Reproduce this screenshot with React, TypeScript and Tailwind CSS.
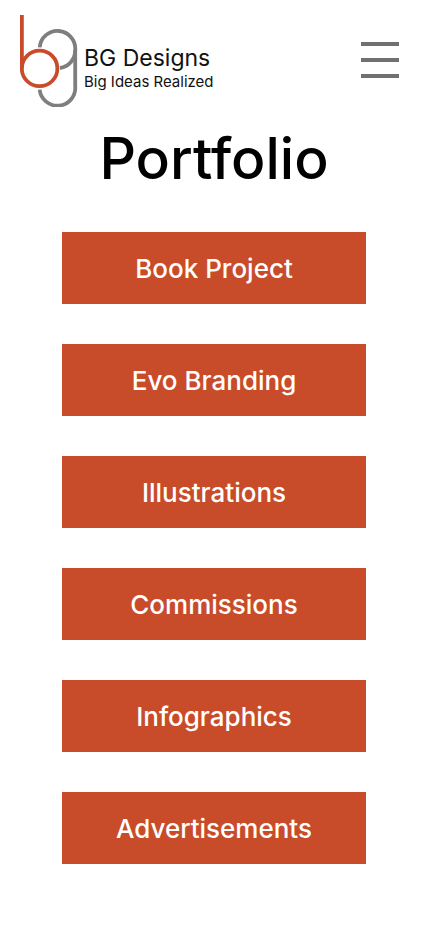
const projects = [
  "Book Project",
  "Evo Branding",
  "Illustrations",
  "Commissions",
  "Infographics",
  "Advertisements",
];

function LogoMark() {
  return (
    <svg width="58" height="92" viewBox="0 0 58 92" fill="none" strokeWidth="3.8" aria-hidden="true">
      <path d="M19.7 32.3A17.8 17.8 0 0 1 55.2 35.2V71.2A17.8 17.8 0 0 1 19.7 74.6" stroke="#7d7f7f" />
      <path d="M55.2 35.2A17.8 17.8 0 0 1 40 53" stroke="#7d7f7f" />
      <path d="M1.9 0V53.4" stroke="#c84c2a" />
      <circle cx="19.6" cy="53.4" r="17.8" stroke="#c84c2a" />
    </svg>
  );
}

export default function App() {
  return (
    <div className="bg-white font-['Inter','Liberation_Sans',sans-serif] text-black">
      <header className="flex items-start justify-between pt-[15px] pr-7 pl-5">
        <a href="#home" className="flex items-start gap-1.5">
          <LogoMark />
          <span className="flex flex-col pt-[29px] text-[#111]">
            <span className="text-[23px] leading-7">BG Designs</span>
            <span className="text-[15px] leading-5">Big Ideas Realized</span>
          </span>
        </a>
        <button type="button" aria-label="Open menu" className="mt-[26px] flex w-10 flex-col gap-3 p-px">
          <span className="h-1 w-full bg-[#717171]" />
          <span className="h-1 w-full bg-[#717171]" />
          <span className="h-1 w-full bg-[#717171]" />
        </button>
      </header>
      <main className="px-[62px] pb-[61px]">
        <h1 className="mt-5 text-center text-[57px] leading-16 font-medium">Portfolio</h1>
        <nav aria-label="Portfolio" className="mt-[41px] flex flex-col gap-10">
          {projects.map((name) => (
            <a
              key={name}
              href="#portfolio"
              className="flex h-18 items-center justify-center bg-[#c84c2a] text-[26px] font-medium text-white"
            >
              {name}
            </a>
          ))}
        </nav>
      </main>
    </div>
  );
}
